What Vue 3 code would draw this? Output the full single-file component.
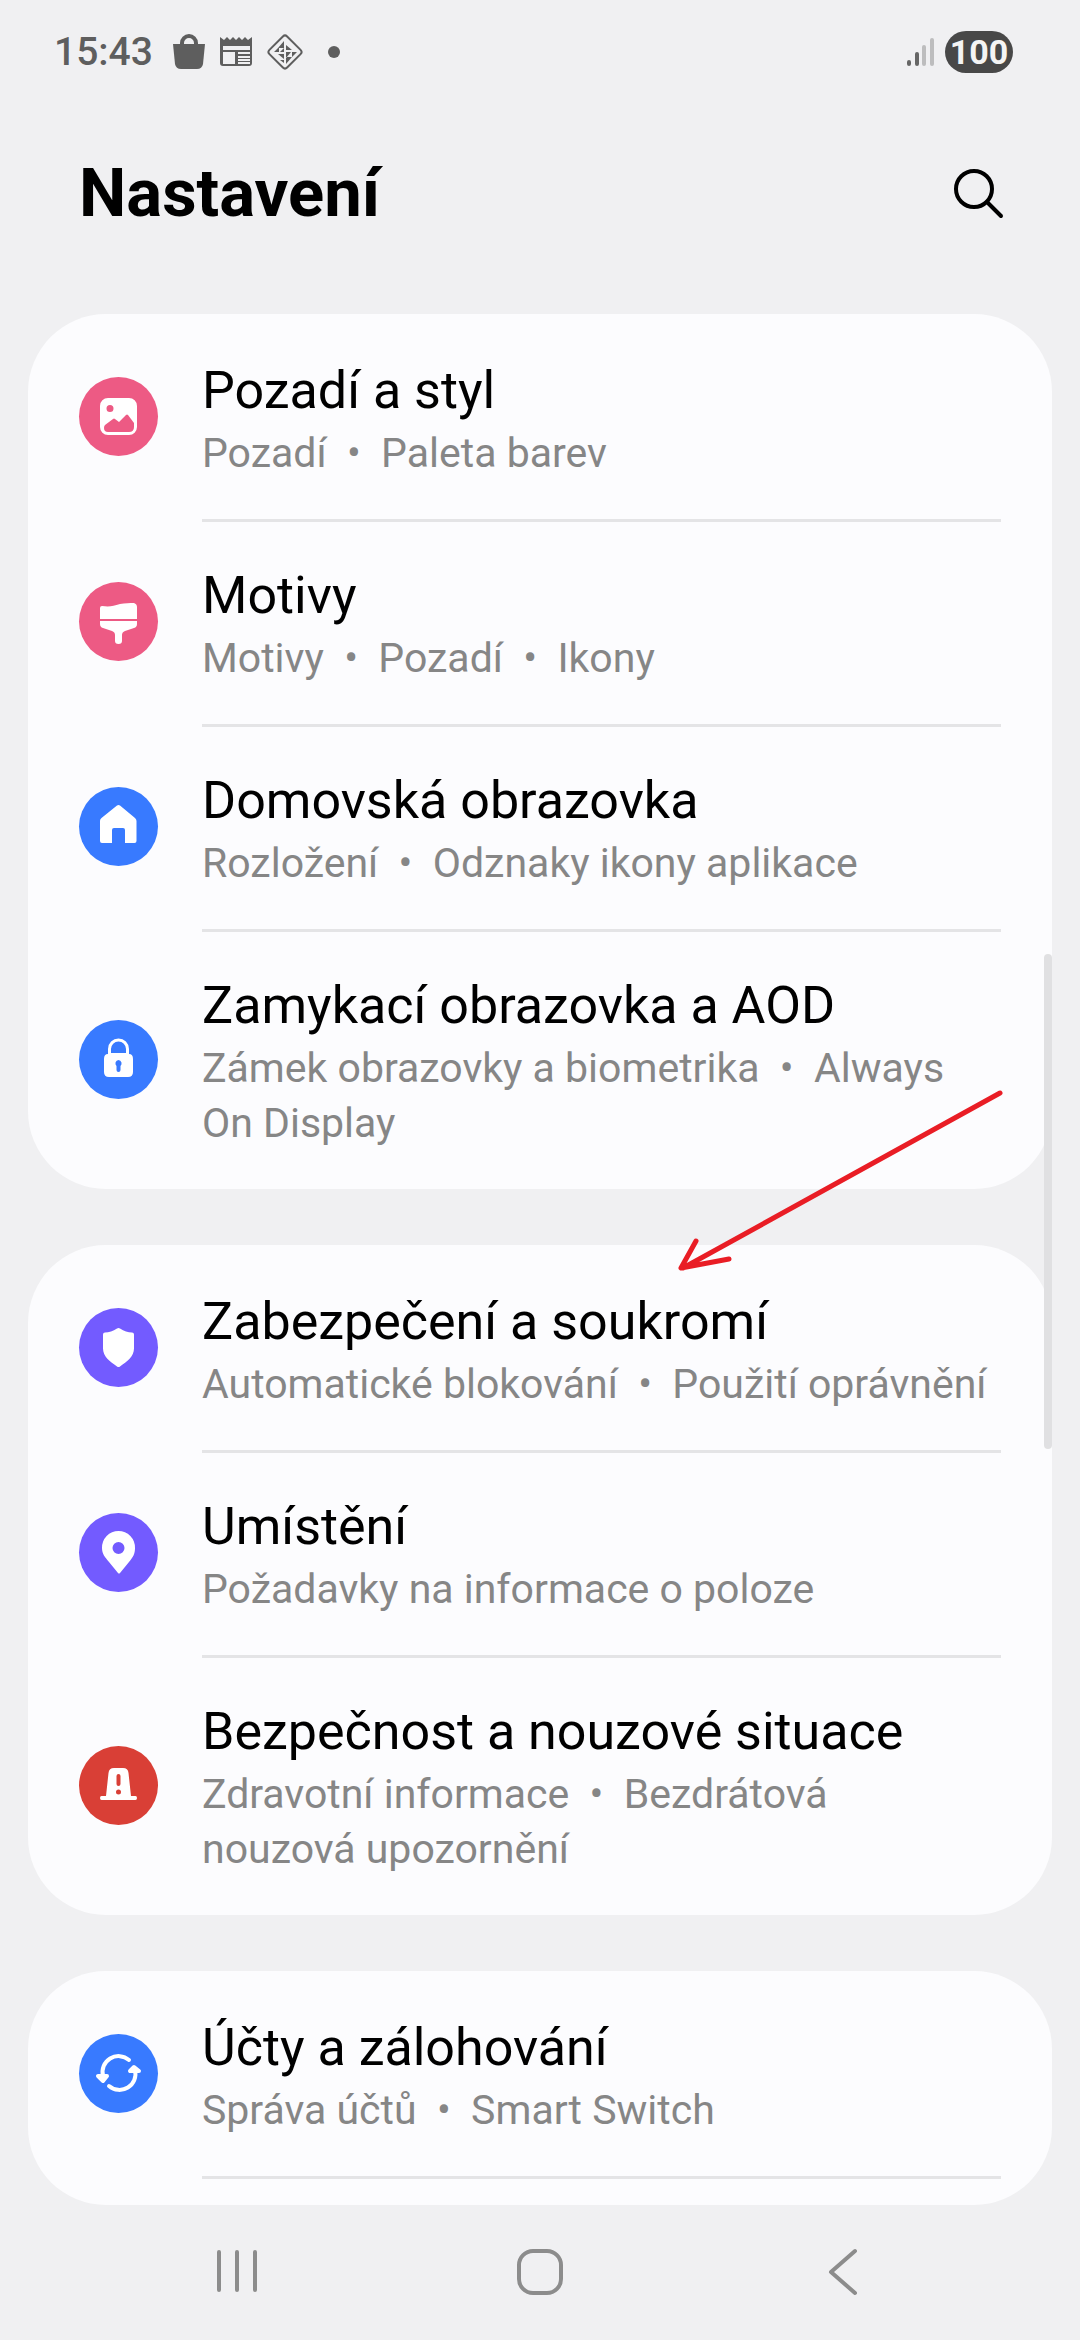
<script setup>
const icons = {
  picture: 'M29 21h21a8 8 0 0 1 8 8v21a8 8 0 0 1-8 8H29a8 8 0 0 1-8-8V29a8 8 0 0 1 8-8ZM31 28a3.500 3.500 0 1 0 0 7 3.500 3.500 0 0 0 0-7ZM25 51q0 4 4 4h21q5 0 5-5v-4l-6-8q-1-1-2 0l-7 7-4-3q-1-1-2 0l-8 6q-1 1-1 3Z',
  brush: 'M21 26q0-2 2-2c8 1 11 0 18-2 5-1 10-1 14-1q3 1 3 4v12H21ZM21 39h37v3q0 3-3 4l-9 3q-3 1-3 4v6q0 3-3.500 3t-3.500-3v-6q0-3-3-4l-9-3q-3-1-3-4Z',
  home: 'M38 18.500q1.500-1.200 3 0L56 31q1.500 1.500 1.500 3v20q0 2-2 2H46V43q0-2-2-2h-9q-2 0-2 2v13H23q-2 0-2-2V34q0-2 1.500-3Z',
  lock: 'M29 34v-5a10.500 10.500 0 0 1 21 0v5q4 0 4 5v13q0 5-5 5H30q-5 0-5-5V39q0-5 4-5ZM32 33h15v-4a7.500 7.500 0 0 0-15 0ZM39.500 40a3.500 3.500 0 0 0-2 6v4q0 2 2 2t2-2v-4a3.500 3.500 0 0 0-2-6Z',
  shield: 'M38 20.500q1.500-1 3 0 6 4 12 4 2 0 2 2v14c0 8-7 13-14 18q-1.500 1-3 0c-7-5-14-10-14-18v-14q0-2 2-2 6 0 12-4Z',
  pin: 'M39.500 18A16.500 16.500 0 0 0 23 35c0 6 3 9 7 14l9 11q1 1 2 0l9-11c4-5 6-8 6-14A16.500 16.500 0 0 0 39.500 18ZM39.500 29a6 6 0 1 1 0 12 6 6 0 0 1 0-12Z',
  siren: 'M35 22h9q5 0 5.500 5l2.500 23h4.500q1.500 0 1.500 2t-1.500 2H22.500q-1.500 0-1.500-2t1.500-2H27l2.500-23q.5-5 5.500-5ZM39.500 28q-2 0-2 2v8q0 2 2 2t2-2v-8q0-2-2-2ZM39.500 43.500a2.500 2.500 0 1 0 0 5 2.500 2.500 0 0 0 0-5Z',
}

const groups = [
  [
    { title: 'Pozadí a styl', sub: 'Pozadí\u00a0 • \u00a0Paleta barev', icon: 'picture', tone: 'pink' },
    { title: 'Motivy', sub: 'Motivy\u00a0 • \u00a0Pozadí\u00a0 • \u00a0Ikony', icon: 'brush', tone: 'pink' },
    { title: 'Domovská obrazovka', sub: 'Rozložení\u00a0 • \u00a0Odznaky ikony aplikace', icon: 'home', tone: 'blue' },
    { title: 'Zamykací obrazovka a AOD', sub: 'Zámek obrazovky a biometrika\u00a0 • \u00a0Always On Display', icon: 'lock', tone: 'blue' },
  ],
  [
    { title: 'Zabezpečení a soukromí', sub: 'Automatické blokování\u00a0 • \u00a0Použití oprávnění', icon: 'shield', tone: 'violet' },
    { title: 'Umístění', sub: 'Požadavky na informace o poloze', icon: 'pin', tone: 'violet' },
    { title: 'Bezpečnost a nouzové situace', sub: 'Zdravotní informace\u00a0 • \u00a0Bezdrátová nouzová\u00a0upozornění', icon: 'siren', tone: 'red' },
  ],
  [
    { title: 'Účty a zálohování', sub: 'Správa účtů\u00a0 • \u00a0Smart Switch', icon: 'sync', tone: 'blue' },
  ],
]
</script>

<template>
  <div class="screen">
    <div class="status">
      <span class="clock">15:43</span>
      <svg class="bag" width="34" height="36" viewBox="0 0 34 36" aria-hidden="true">
        <path d="M1 10h32l-2 20q-1 5-6 5H9q-5 0-6-5Z" fill="#5e5e5e" />
        <path d="M10 12V9a7 7 0 0 1 14 0v3" fill="none" stroke="#5e5e5e" stroke-width="4" />
      </svg>
      <svg class="news" width="34" height="30" viewBox="0 0 34 30" aria-hidden="true">
        <path d="M1 0l4 3 3-3 3 3 3-3 3 3 3-3 3 3 3-3 3 3 4-3v26q0 3-3 3H4q-3 0-3-3Z" fill="#5e5e5e" />
        <path d="M4 9h27v4H4ZM4 15h12v12H4ZM19 15h12v2H19ZM19 19h12v2H19ZM19 22h12v2H19ZM19 25h12v2H19Z" fill="#f0f0f2" />
      </svg>
      <svg class="diamond" width="38" height="38" viewBox="0 0 38 38" aria-hidden="true">
        <rect x="6.500" y="6.500" width="25" height="25" rx="3" transform="rotate(45 19 19)" fill="none" stroke="#5e5e5e" stroke-width="2" />
        <path d="M18 8v7h-6ZM20 12l6 5h-6ZM8 19l5-5v5ZM14 19h4v-4ZM20 19h5l-5 6ZM26 19h5l-5 5ZM12 21h6v5ZM20 24v7l6-7ZM18 27v3l-4-3Z" fill="#5e5e5e" />
      </svg>
      <span class="dot"></span>
      <svg class="signal" width="28" height="30" viewBox="0 0 28 30" aria-hidden="true">
        <g stroke-width="4" stroke-linecap="round">
          <path d="M2 25v2M10 17v10" stroke="#666" />
          <path d="M17 10v17M25 3v24" stroke="#bdbdbe" />
        </g>
      </svg>
      <span class="battery">100</span>
    </div>

    <header class="header">
      <h1>Nastavení</h1>
      <button class="search" type="button" aria-label="Hledat">
        <svg width="52" height="52" viewBox="0 0 52 52" aria-hidden="true">
          <g fill="none" stroke="#000" stroke-width="4" stroke-linecap="round">
            <circle cx="22" cy="22" r="18" />
            <path d="M35 35l14 14" />
          </g>
        </svg>
      </button>
    </header>

    <main class="list">
      <section v-for="(group, g) in groups" :key="g" class="card">
        <a v-for="item in group" :key="item.title" class="row" href="#">
          <svg class="icon" :class="item.tone" viewBox="0 0 79 79" aria-hidden="true">
            <g v-if="item.icon === 'sync'" fill="none" stroke="#fff" stroke-width="4" stroke-linecap="round">
              <path d="M50 26A16 16 0 0 0 24 42M30 52A16 16 0 0 0 56 36" />
              <path d="M19 42h9l-4 5ZM51 37h9l-5-4Z" fill="#fff" stroke-linejoin="round" />
            </g>
            <path v-else :d="icons[item.icon]" fill="#fff" fill-rule="evenodd" />
          </svg>
          <span class="text">
            <span class="title">{{ item.title }}</span>
            <span class="sub">{{ item.sub }}</span>
          </span>
        </a>
      </section>
      <div class="scrollbar"></div>
      <svg class="arrow" width="328" height="186" viewBox="0 0 328 186" aria-hidden="true">
        <g fill="none" stroke="#e91d25" stroke-width="5" stroke-linecap="round" stroke-linejoin="round">
          <path d="M323 3L6 178M19 151L4 178l48-9" />
        </g>
      </svg>
    </main>

    <nav class="navbar">
      <button type="button" aria-label="Poslední aplikace">
        <svg width="50" height="50" viewBox="0 0 50 50"><path d="M7 4v38M25 4v38M43 4v38" /></svg>
      </button>
      <button type="button" aria-label="Domů">
        <svg width="50" height="50" viewBox="0 0 50 50"><rect x="4" y="3" width="42" height="42" rx="14" /></svg>
      </button>
      <button type="button" aria-label="Zpět">
        <svg width="50" height="50" viewBox="0 0 50 50"><path d="M37 3L13 24l24 21" /></svg>
      </button>
    </nav>
  </div>
</template>

<style>
body {
  margin: 0;
  background: #f0f0f2;
}
</style>

<style scoped>
.screen {
  display: flex;
  flex-direction: column;
  height: 100vh;
  overflow: hidden;
  background: #f0f0f2;
  font-family: Roboto, "Noto Sans", sans-serif;
}
.status {
  display: flex;
  align-items: center;
  height: 104px;
  padding: 0 67px 0 54px;
  color: #5e5e5e;
}
.clock {
  margin-right: 19px;
  font-size: 39px;
  font-weight: 500;
}
.news,
.diamond {
  margin-left: 13px;
}
.dot {
  width: 12px;
  height: 12px;
  margin-left: 24px;
  border-radius: 50%;
  background: #5e5e5e;
}
.signal {
  margin-left: auto;
}
.battery {
  width: 68px;
  margin-left: 10px;
  border-radius: 21px;
  background: #484848;
  color: #f4f4f4;
  font-size: 34px;
  font-weight: 700;
  line-height: 42px;
  text-align: center;
}
.header {
  display: flex;
  align-items: center;
  justify-content: space-between;
  height: 178px;
  padding: 0 76px 0 79px;
}
h1 {
  margin: 0;
  font-size: 67px;
  line-height: 80px;
  font-weight: 700;
}
button {
  padding: 0;
  border: 0;
  background: none;
}
.search svg {
  display: block;
}
.list {
  position: relative;
  display: flex;
  flex-direction: column;
  gap: 56px;
  flex: 1;
  min-height: 0;
  margin: 32px 28px 0;
  overflow: hidden;
  border-radius: 0 0 78px 78px;
}
.card {
  flex: none;
  border-radius: 78px;
  background: #fcfcfe;
}
.card:last-of-type {
  padding-bottom: 120px;
}
.card:last-of-type::after {
  content: "";
  display: block;
  height: 3px;
  margin: 0 51px 0 174px;
  background: #e4e4e6;
}
.row {
  display: flex;
  align-items: center;
  gap: 44px;
  padding: 0 51px;
  color: #000;
  text-decoration: none;
}
.icon {
  flex: none;
  width: 79px;
  height: 79px;
  border-radius: 50%;
}
.pink { background: #ed5a84; }
.blue { background: #387aff; }
.violet { background: #735bff; }
.red { background: #d93f36; }
.text {
  flex: 1;
  min-width: 0;
  padding: 39px 0 38px;
  border-top: 3px solid transparent;
}
.row + .row .text {
  border-top-color: #e4e4e6;
}
.title,
.sub {
  display: block;
}
.title {
  font-size: 52px;
  line-height: 70px;
}
.sub {
  color: #868686;
  font-size: 41px;
  line-height: 55px;
}
.scrollbar {
  position: absolute;
  top: 640px;
  right: 0;
  width: 8px;
  height: 495px;
  border-radius: 4px;
  background: #e0e0e2;
}
.arrow {
  position: absolute;
  top: 776px;
  right: 47px;
}
.navbar {
  display: flex;
  justify-content: space-between;
  align-items: center;
  height: 135px;
  padding: 0 212px;
}
.navbar svg {
  display: block;
  fill: none;
  stroke: #8c8c8c;
  stroke-width: 4px;
  stroke-linecap: round;
  stroke-linejoin: round;
}
</style>
